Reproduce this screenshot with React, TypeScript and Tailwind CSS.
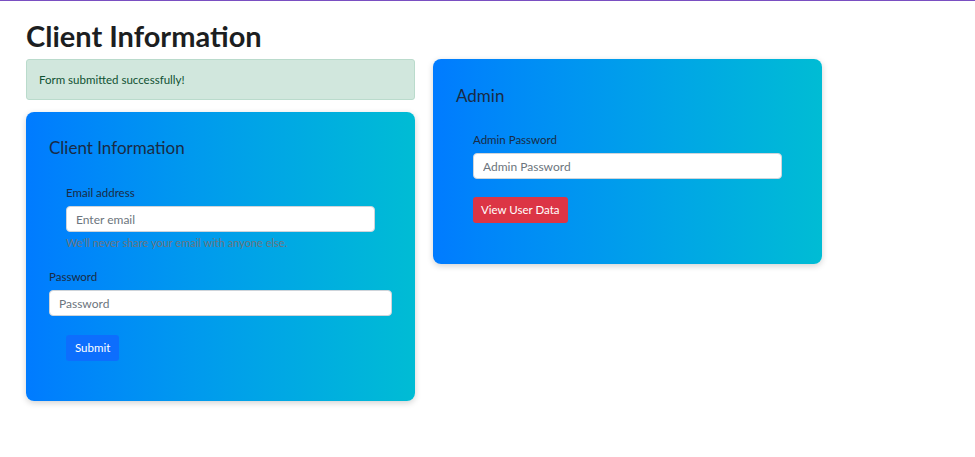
import React from "react";

const font = { fontFamily: 'Lato, "Noto Sans", sans-serif' };

function Field({ label, placeholder, type = "text" }: { label: string; placeholder: string; type?: string }) {
  return (
    <div>
      <label className="block text-[11.5px] leading-[18px] text-[#1a2b45]">{label}</label>
      <input
        type={type}
        placeholder={placeholder}
        className="mt-[4px] block h-[26px] w-full rounded-[4px] border border-[#ced4da] bg-white px-[9px] text-[12px] text-[#212529] placeholder:text-[#6c757d] outline-none"
      />
    </div>
  );
}

export default function App() {
  return (
    <div className="min-h-[457px] bg-white border-t border-[#7a4fc2]" style={font}>
      <div className="px-[26px] pt-[17px]">
        <h1 className="text-[29px] leading-[36px] font-bold text-[#1c1e21]">Client Information</h1>
        <div className="mt-[5px] flex items-start gap-[18px]">
          <div className="w-[389px]">
            <div className="h-[41px] rounded-[3px] border border-[#badbcc] bg-[#d1e7dd] px-[12px] flex items-center text-[11.5px] text-[#0f5132]">
              Form submitted successfully!
            </div>
            <div className="mt-[12px] rounded-[8px] bg-gradient-to-r from-[#007bff] to-[#00bcd4] px-[23px] pt-[25px] pb-[40px] shadow-[0_2px_6px_rgba(0,0,0,0.18)]">
              <h3 className="text-[17px] leading-[22px] text-[#1a2b45]">Client Information</h3>
              <div className="mx-[17px] mt-[25px]">
                <Field label="Email address" placeholder="Enter email" type="email" />
                <p className="mt-[4px] text-[11px] leading-[14px] text-[#6c757d]">We'll never share your email with anyone else.</p>
              </div>
              <div className="mt-[18px]">
                <Field label="Password" placeholder="Password" type="password" />
              </div>
              <button className="ml-[17px] mt-[19px] h-[26px] rounded-[3px] bg-[#0d6efd] px-[9px] text-[11.5px] text-white">
                Submit
              </button>
            </div>
          </div>
          <div className="w-[389px] rounded-[8px] bg-gradient-to-r from-[#007bff] to-[#00bcd4] px-[23px] pt-[26px] pb-[41px] shadow-[0_2px_6px_rgba(0,0,0,0.18)]">
            <h3 className="text-[17px] leading-[22px] text-[#1a2b45]">Admin</h3>
            <div className="mx-[17px] mt-[24px]">
              <Field label="Admin Password" placeholder="Admin Password" type="password" />
              <button className="mt-[18px] h-[26px] rounded-[3px] bg-[#dc3545] px-[8px] text-[11.5px] text-white">
                View User Data
              </button>
            </div>
          </div>
        </div>
      </div>
    </div>
  );
}
